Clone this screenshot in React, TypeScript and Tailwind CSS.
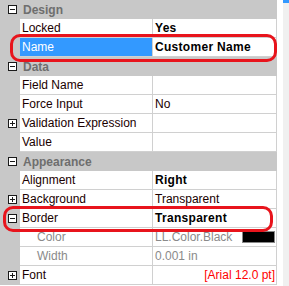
import React from 'react';

type Row =
  | { kind: 'cat'; label: string }
  | {
      kind: 'prop';
      label: string;
      value?: string;
      bold?: boolean;
      toggle?: '+' | '-';
      selected?: boolean;
      sub?: boolean;
      swatch?: boolean;
      red?: boolean;
    };

const rows: Row[] = [
  { kind: 'cat', label: 'Design' },
  { kind: 'prop', label: 'Locked', value: 'Yes', bold: true },
  { kind: 'prop', label: 'Name', value: 'Customer Name', bold: true, selected: true },
  { kind: 'cat', label: 'Data' },
  { kind: 'prop', label: 'Field Name' },
  { kind: 'prop', label: 'Force Input', value: 'No' },
  { kind: 'prop', label: 'Validation Expression', toggle: '+' },
  { kind: 'prop', label: 'Value' },
  { kind: 'cat', label: 'Appearance' },
  { kind: 'prop', label: 'Alignment', value: 'Right', bold: true },
  { kind: 'prop', label: 'Background', value: 'Transparent', toggle: '+' },
  { kind: 'prop', label: 'Border', value: 'Transparent', bold: true, toggle: '-' },
  { kind: 'prop', label: 'Color', value: 'LL.Color.Black', sub: true, swatch: true },
  { kind: 'prop', label: 'Width', value: '0.001 in', sub: true },
  { kind: 'prop', label: 'Font', value: '[Arial 12.0 pt]', toggle: '+', red: true },
];

function Toggle({ sign }: { sign: '+' | '-' }) {
  return (
    <svg width="9" height="9" viewBox="0 0 9 9" className="block">
      <rect x="0.5" y="0.5" width="8" height="8" fill="#ffffff" stroke="#1a1a1a" />
      <line x1="2" y1="4.5" x2="7" y2="4.5" stroke="#1a1a1a" />
      {sign === '+' && <line x1="4.5" y1="2" x2="4.5" y2="7" stroke="#1a1a1a" />}
    </svg>
  );
}

export default function App() {
  return (
    <div
      className="relative flex w-[289px] h-[286px] overflow-hidden bg-white text-[12px] leading-none"
      style={{ fontFamily: '"Liberation Sans", Arial, sans-serif' }}
    >
      {/* grid */}
      <div className="flex flex-col w-[283px] shrink-0">
        {rows.map((row, i) => {
          if (row.kind === 'cat') {
            return (
              <div key={i} className="flex items-center h-[19px] min-h-[19px] w-[277px] bg-[#c8c8c8] shrink-0">
                <div className="flex items-center justify-center w-[20px] pl-[5px]">
                  <Toggle sign="-" />
                </div>
                <span className="pl-[3px] font-bold text-[#6e6e6e]">{row.label}</span>
              </div>
            );
          }
          return (
            <div key={i} className="flex h-[19px] min-h-[19px] w-[277px] shrink-0">
              <div className="flex items-center justify-center w-[20px] pl-[5px] bg-[#c8c8c8]">
                {row.toggle && <Toggle sign={row.toggle} />}
              </div>
              <div
                className={`flex items-center w-[132px] border-b border-[#d0d0d0] ${
                  row.selected ? 'bg-[#3399ff] text-white' : 'text-[#1a0000]'
                } ${row.sub ? 'pl-[17px] text-[#8a8a8a]' : 'pl-[2px]'}`}
              >
                {row.label}
              </div>
              <div className="flex items-center flex-1 border-l border-b border-r border-[#d0d0d0] pl-[2px] pr-[1px]">
                {row.value && (
                  <span
                    className={`${row.bold ? 'font-bold text-black tracking-[0.3px]' : ''} ${
                      row.sub ? 'text-[#8a8a8a]' : 'text-[#1a0000]'
                    } ${row.red ? 'ml-auto text-[#ff0000]' : ''}`}
                  >
                    {row.value}
                  </span>
                )}
                {row.swatch && <div className="ml-auto w-[33px] h-[12px] bg-black border border-[#888888]" />}
              </div>
            </div>
          );
        })}
      </div>

      {/* scrollbar strip */}
      <div className="flex flex-col flex-1 bg-[#f0f0f0]">
        <div className="h-[3px] bg-[#3399ff]" />
      </div>

      {/* red hand-drawn markers */}
      <div className="absolute left-[10px] top-[34px] w-[267px] h-[28px] rounded-[10px] border-[3px] border-[#e8141c]" />
      <div className="absolute left-[3px] top-[206px] w-[270px] h-[26px] rounded-[10px] border-[3px] border-[#e8141c]" />
    </div>
  );
}
